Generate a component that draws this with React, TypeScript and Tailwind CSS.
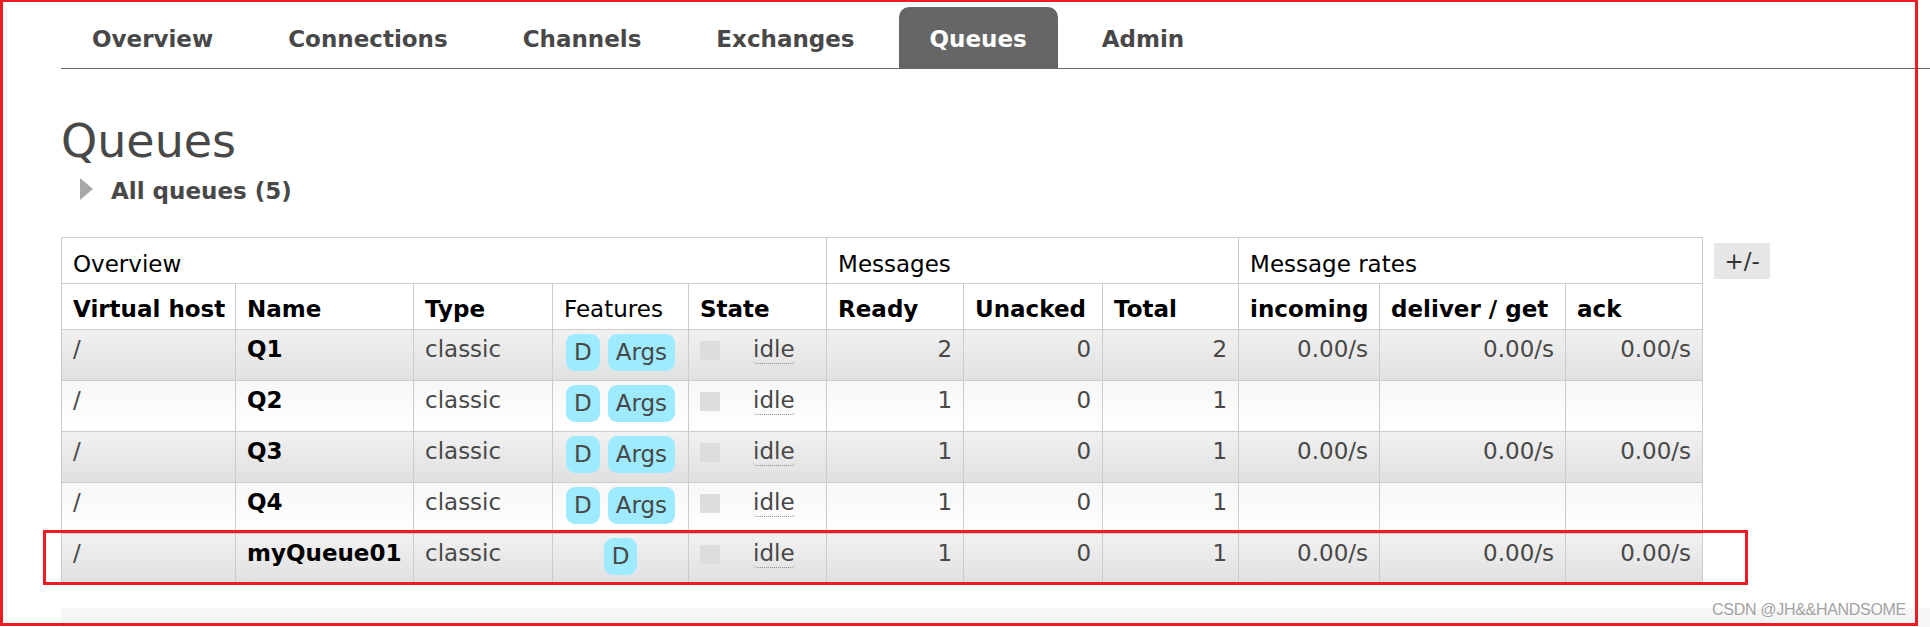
import React from 'react';

type Queue = {
  name: string;
  args: boolean;
  ready: number;
  unacked: number;
  total: number;
  rates: boolean;
};

const queues: Queue[] = [
  { name: 'Q1', args: true, ready: 2, unacked: 0, total: 2, rates: true },
  { name: 'Q2', args: true, ready: 1, unacked: 0, total: 1, rates: false },
  { name: 'Q3', args: true, ready: 1, unacked: 0, total: 1, rates: true },
  { name: 'Q4', args: true, ready: 1, unacked: 0, total: 1, rates: false },
  { name: 'myQueue01', args: false, ready: 1, unacked: 0, total: 1, rates: true },
];

const tabs = ['Overview', 'Connections', 'Channels', 'Exchanges', 'Queues', 'Admin'];

const Badge = ({ label }: { label: string }) => (
  <span className="inline-block rounded-[9px] bg-[#9eebff] px-2 py-[5px] leading-[27px] text-[#484848]">{label}</span>
);

const cell = 'border border-[#ccc] px-[11px] align-top';

const App: React.FC = () => {
  return (
    <div className="relative h-[627px] w-[1930px] overflow-hidden bg-white font-['DejaVu_Sans',sans-serif] text-[23px] leading-[27px] text-[#484848]">
      {/* top menu */}
      <ul className="ml-[61px] flex border-b border-[#666] pt-[7px]">
        {tabs.map((t) => (
          <li
            key={t}
            className={
              t === 'Queues'
                ? 'mr-[13px] rounded-t-[10px] bg-[#666] px-[31px] pt-[19px] pb-[15px] font-bold text-white'
                : 'mr-[13px] px-[31px] pt-[19px] pb-[15px] font-bold text-[#484848]'
            }
          >
            {t}
          </li>
        ))}
      </ul>

      <div className="pl-[61px]">
        <h1 className="mt-[45px] text-[46px] leading-[54px] font-normal text-[#484848]">Queues</h1>

        <div className="mt-[10px] flex items-center">
          <svg width="13" height="22" viewBox="0 0 13 22" className="ml-[19px] -mt-[6px]">
            <polygon points="0,0 13,11 0,22" fill="#a8a8a8" />
          </svg>
          <span className="ml-[18px] font-bold text-[#484848]">All queues (5)</span>
        </div>

        <div className="mt-[32px] flex items-start">
          <table className="w-[1641px] table-fixed border-collapse">
            <colgroup>
              <col className="w-[174px]" />
              <col className="w-[178px]" />
              <col className="w-[139px]" />
              <col className="w-[136px]" />
              <col className="w-[138px]" />
              <col className="w-[137px]" />
              <col className="w-[139px]" />
              <col className="w-[136px]" />
              <col className="w-[141px]" />
              <col className="w-[186px]" />
              <col className="w-[137px]" />
            </colgroup>
            <thead>
              <tr className="h-[46px] text-black">
                <th colSpan={5} className={`${cell} pt-[13px] text-left font-normal`}>Overview</th>
                <th colSpan={3} className={`${cell} pt-[13px] text-left font-normal`}>Messages</th>
                <th colSpan={3} className={`${cell} pt-[13px] text-left font-normal`}>Message rates</th>
              </tr>
              <tr className="h-[46px] text-black">
                <th className={`${cell} pt-[12px] text-left font-bold whitespace-nowrap`}>Virtual host</th>
                <th className={`${cell} pt-[12px] text-left font-bold`}>Name</th>
                <th className={`${cell} pt-[12px] text-left font-bold`}>Type</th>
                <th className={`${cell} pt-[12px] text-left font-normal`}>Features</th>
                <th className={`${cell} pt-[12px] text-left font-bold`}>State</th>
                <th className={`${cell} pt-[12px] text-left font-bold`}>Ready</th>
                <th className={`${cell} pt-[12px] text-left font-bold`}>Unacked</th>
                <th className={`${cell} pt-[12px] text-left font-bold`}>Total</th>
                <th className={`${cell} pt-[12px] text-left font-bold`}>incoming</th>
                <th className={`${cell} pt-[12px] text-left font-bold whitespace-nowrap`}>deliver / get</th>
                <th className={`${cell} pt-[12px] text-left font-bold`}>ack</th>
              </tr>
            </thead>
            <tbody>
              {queues.map((q, i) => (
                <tr
                  key={q.name}
                  className={
                    i % 2 === 0
                      ? 'h-[51px] bg-linear-to-b from-[#f1f1f1] to-[#e0e0e0]'
                      : 'h-[51px] bg-linear-to-b from-[#f7f7f7] to-[#ffffff]'
                  }
                >
                  <td className={`${cell} pt-[6px]`}>/</td>
                  <td className={`${cell} pt-[6px] font-bold text-black`}>{q.name}</td>
                  <td className={`${cell} pt-[6px]`}>classic</td>
                  <td className={`${cell} pt-[4px]`}>
                    <div className="flex justify-center gap-2">
                      <Badge label="D" />
                      {q.args && <Badge label="Args" />}
                    </div>
                  </td>
                  <td className={`${cell} pt-[6px]`}>
                    <div className="flex items-start">
                      <span className="mt-[5px] h-[19px] w-5 bg-[#ddd]" />
                      <span className="ml-[33px] rounded-b-[4px] border-b border-dotted border-[#888]">idle</span>
                    </div>
                  </td>
                  <td className={`${cell} pt-[6px] text-right`}>{q.ready}</td>
                  <td className={`${cell} pt-[6px] text-right`}>{q.unacked}</td>
                  <td className={`${cell} pt-[6px] text-right`}>{q.total}</td>
                  <td className={`${cell} pt-[6px] text-right`}>{q.rates ? '0.00/s' : ''}</td>
                  <td className={`${cell} pt-[6px] text-right`}>{q.rates ? '0.00/s' : ''}</td>
                  <td className={`${cell} pt-[6px] text-right`}>{q.rates ? '0.00/s' : ''}</td>
                </tr>
              ))}
            </tbody>
          </table>
          <button className="mt-[6px] ml-[11px] flex h-[36px] w-[56px] items-center justify-center bg-[#e6e6e6] text-[23px] text-[#333]">
            +/-
          </button>
        </div>

        <div className="mt-[23px] h-[40px] bg-[#f7f7f7]" />
      </div>

      {/* screenshot annotations */}
      <div className="pointer-events-none absolute top-0 left-0 h-[626px] w-[1918px] border-t-2 border-r-[3px] border-b-[3px] border-l-[3px] border-[#ed1c24]" />
      <div className="pointer-events-none absolute top-[530px] left-[43px] h-[55px] w-[1705px] border-[3px] border-[#ed1c24]" />
      <div className="pointer-events-none absolute top-[600px] left-[1712px] font-['Liberation_Sans',sans-serif] text-[16px] leading-[20px] tracking-[-0.3px] text-[#a3a3a3]">
        CSDN @JH&amp;&amp;HANDSOME
      </div>
    </div>
  );
};

export default App;
